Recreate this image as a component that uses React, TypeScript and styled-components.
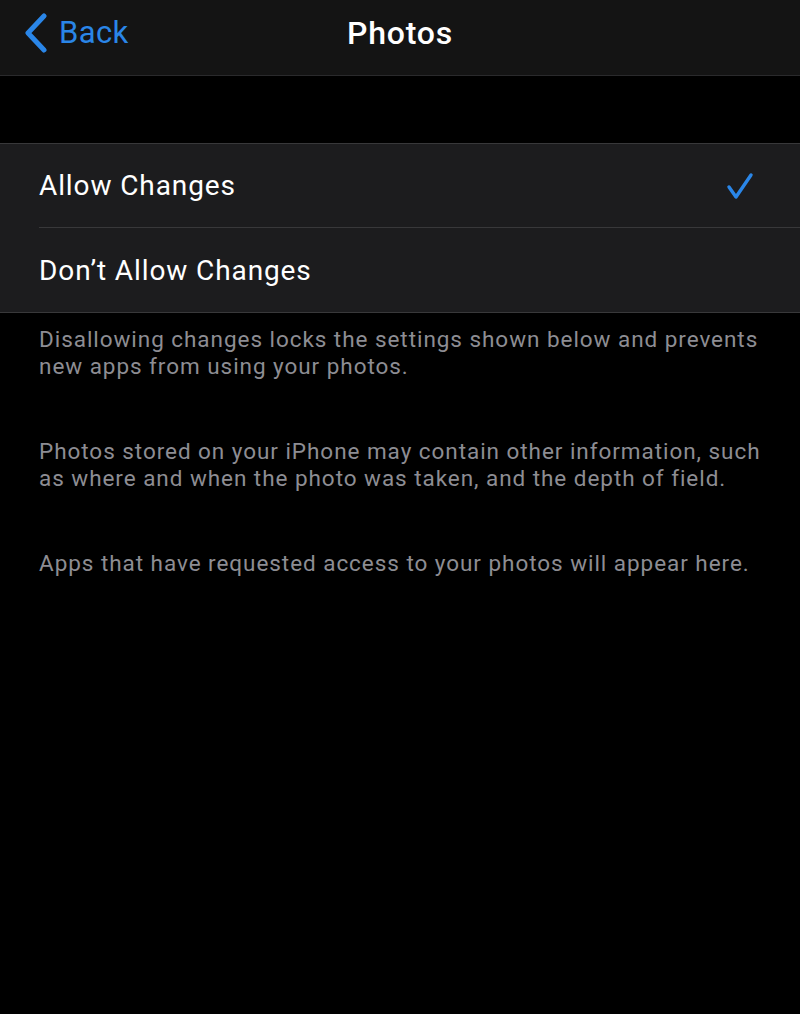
import React from 'react';
import styled, { createGlobalStyle } from 'styled-components';

const Global = createGlobalStyle`
  html, body {
    margin: 0;
    padding: 0;
    background: #000000;
  }
  body {
    font-family: Roboto, "Noto Sans", "Liberation Sans", sans-serif;
    -webkit-font-smoothing: antialiased;
  }
`;

const Page = styled.div`
  width: 800px;
  min-height: 1014px;
  background: #000000;
`;

const NavBar = styled.header`
  height: 65px;
  padding: 0 24px 10px;
  background: #141414;
  border-bottom: 1px solid #2a2a2c;
  display: grid;
  grid-template-columns: 1fr auto 1fr;
  align-items: center;
  box-sizing: content-box;
`;

const BackButton = styled.a`
  display: flex;
  align-items: center;
  gap: 11px;
  color: #2a86e8;
  font-size: 31px;
  letter-spacing: 0.4px;
  text-decoration: none;
  justify-self: start;
`;

const Title = styled.h1`
  margin: 0;
  color: #ffffff;
  font-size: 32px;
  font-weight: 500;
  letter-spacing: 0.8px;
`;

const Spacer = styled.div`
  height: 67px;
`;

const Group = styled.ul`
  list-style: none;
  margin: 0;
  padding: 0;
  background: #1c1c1e;
  border-top: 1px solid #38383a;
  border-bottom: 1px solid #38383a;
`;

const Item = styled.li`
  padding-left: 39px;
`;

const ItemInner = styled.div<{ $last?: boolean }>`
  height: ${p => (p.$last ? 84 : 83)}px;
  display: flex;
  align-items: center;
  justify-content: space-between;
  padding-right: 46px;
  border-bottom: ${p => (p.$last ? 'none' : '1px solid #38383a')};
  color: #ffffff;
  font-size: 28px;
  letter-spacing: 0.9px;
`;

const Footer = styled.div`
  padding: 13px 20px 0 39px;
`;

const Note = styled.p`
  margin: 0 0 58px;
  color: #8d8d93;
  font-size: 22.5px;
  letter-spacing: 0.95px;
  line-height: 27px;
`;

const Chevron = () => (
  <svg width="24" height="40" viewBox="0 0 24 40" fill="none">
    <path d="M20 3 L4 20 L20 37" stroke="#2a86e8" strokeWidth="5" strokeLinecap="round" strokeLinejoin="round" />
  </svg>
);

const Check = () => (
  <svg width="28" height="28" viewBox="0 0 28 28" fill="none">
    <path d="M3 15 L10 25 L25 3" stroke="#2a86e8" strokeWidth="3.4" strokeLinecap="round" strokeLinejoin="round" />
  </svg>
);

const options = [
  { label: 'Allow Changes', selected: true },
  { label: 'Don\u2019t Allow Changes', selected: false },
];

const notes = [
  'Disallowing changes locks the settings shown below and prevents new apps from using your photos.',
  'Photos stored on your iPhone may contain other information, such as where and when the photo was taken, and the depth of field.',
  'Apps that have requested access to your photos will appear here.',
];

export default function App() {
  return (
    <Page>
      <Global />
      <NavBar>
        <BackButton href="#">
          <Chevron />
          Back
        </BackButton>
        <Title>Photos</Title>
        <div />
      </NavBar>
      <Spacer />
      <Group>
        {options.map((o, i) => (
          <Item key={o.label}>
            <ItemInner $last={i === options.length - 1}>
              {o.label}
              {o.selected && <Check />}
            </ItemInner>
          </Item>
        ))}
      </Group>
      <Footer>
        {notes.map(n => (
          <Note key={n}>{n}</Note>
        ))}
      </Footer>
    </Page>
  );
}
